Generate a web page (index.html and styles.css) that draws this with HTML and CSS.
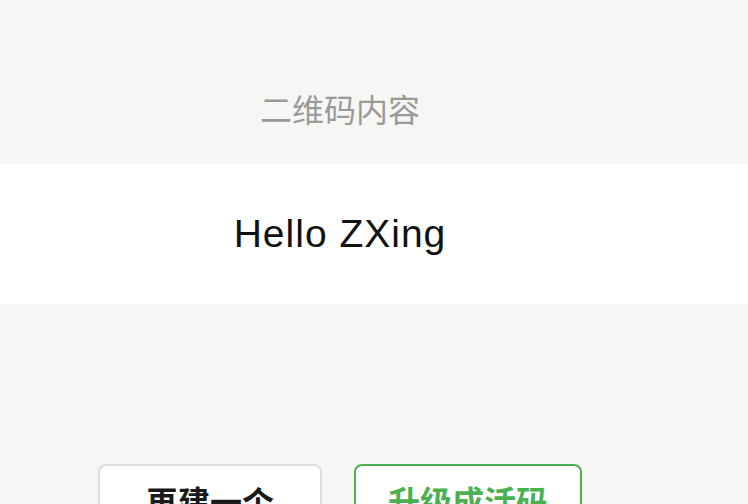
FILE: index.html
```html
<!DOCTYPE html>
<html lang="zh-CN">
<head>
<meta charset="utf-8">
<link rel="stylesheet" href="styles.css">
</head>
<body>
<div class="page">
  <div class="label-area">
    <div class="label">二维码内容</div>
  </div>
  <div class="content-band">
    <div class="content">Hello ZXing</div>
  </div>
  <div class="actions">
    <button class="btn btn-plain">再建一个</button>
    <button class="btn btn-green">升级成活码</button>
  </div>
</div>
</body>
</html>
```
FILE: styles.css
```css
html, body {
  margin: 0;
  padding: 0;
  background: #f6f7f5;
  overflow: hidden;
}
body {
  font-family: "Liberation Sans", "Noto Sans CJK SC", sans-serif;
  width: 748px;
  height: 504px;
}
.label-area {
  height: 164px;
  width: 680px;
  display: flex;
  justify-content: center;
  box-sizing: border-box;
  padding-top: 90px;
}
.label {
  font-family: "Noto Sans CJK SC", sans-serif;
  font-size: 32px;
  line-height: 36px;
  color: #9a9a9a;
}
.content-band {
  background: #ffffff;
  height: 140px;
}
.content {
  width: 680px;
  text-align: center;
  padding-top: 48px;
  font-size: 39px;
  line-height: 44px;
  letter-spacing: 1px;
  color: #111111;
}
.actions {
  width: 680px;
  display: flex;
  justify-content: center;
  gap: 32px;
  padding-top: 160px;
}
.btn {
  box-sizing: border-box;
  height: 90px;
  padding: 18px 0 0;
  border-radius: 8px;
  background: #ffffff;
  font-family: "Noto Sans CJK SC", sans-serif;
  font-size: 32px;
  line-height: 32px;
  font-weight: 600;
  display: flex;
  justify-content: center;
  align-items: flex-start;
}
.btn-plain {
  width: 224px;
  border: 2px solid #dcdde0;
  color: #1a1a1a;
}
.btn-green {
  width: 228px;
  border: 2px solid #4caf50;
  color: #4caf50;
}
```
